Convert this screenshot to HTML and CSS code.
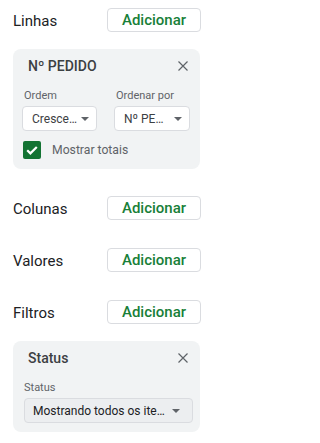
FILE: index.html
```html
<!DOCTYPE html>
<html lang="pt">
<head>
<meta charset="utf-8">
<link rel="stylesheet" href="styles.css">
</head>
<body>
<div class="panel">
  <div class="row">
    <span class="row-label">Linhas</span>
    <button class="add-btn">Adicionar</button>
  </div>

  <div class="card card-rows">
    <div class="card-head">
      <span class="card-title">Nº PEDIDO</span>
      <svg class="close" width="10" height="10" viewBox="0 0 10 10"><path d="M0.5 0.5L9.5 9.5M9.5 0.5L0.5 9.5" stroke="#5f6368" stroke-width="1.2" fill="none"/></svg>
    </div>
    <div class="sort-grid">
      <div class="field">
        <span class="field-label">Ordem</span>
        <div class="select"><span class="select-text">Cresce…</span><span class="caret"></span></div>
      </div>
      <div class="field">
        <span class="field-label">Ordenar por</span>
        <div class="select"><span class="select-text">Nº PE…</span><span class="caret"></span></div>
      </div>
    </div>
    <div class="check-row">
      <span class="checkbox">
        <svg width="18" height="18" viewBox="0 0 18 18"><path d="M4.2 9.2L7.4 12.4L13.8 6" stroke="#fff" stroke-width="2.2" fill="none"/></svg>
      </span>
      <span class="check-label">Mostrar totais</span>
    </div>
  </div>

  <div class="row row-gap">
    <span class="row-label">Colunas</span>
    <button class="add-btn">Adicionar</button>
  </div>
  <div class="row row-gap">
    <span class="row-label">Valores</span>
    <button class="add-btn">Adicionar</button>
  </div>
  <div class="row row-gap">
    <span class="row-label">Filtros</span>
    <button class="add-btn">Adicionar</button>
  </div>

  <div class="card card-filter">
    <div class="card-head">
      <span class="card-title">Status</span>
      <svg class="close" width="10" height="10" viewBox="0 0 10 10"><path d="M0.5 0.5L9.5 9.5M9.5 0.5L0.5 9.5" stroke="#5f6368" stroke-width="1.2" fill="none"/></svg>
    </div>
    <span class="field-label filter-label">Status</span>
    <div class="select select-gray"><span class="select-text">Mostrando todos os ite…</span><span class="caret"></span></div>
  </div>
</div>
</body>
</html>
```

FILE: styles.css
```css
html, body {
  margin: 0;
  padding: 0;
  background: #ffffff;
}

body {
  font-family: Roboto, "Noto Sans", sans-serif;
  color: #202124;
}

.panel {
  width: 212px;
  box-sizing: border-box;
  padding: 8px 11px 0 13px;
}

.row {
  display: flex;
  align-items: center;
  justify-content: space-between;
  height: 24px;
}

.row-gap {
  margin-top: 28px;
}

.card-rows + .row-gap {
  margin-top: 27px;
}

.row-label {
  font-size: 15px;
  color: #202124;
  padding-top: 2px;
}

.add-btn {
  width: 94px;
  height: 24px;
  box-sizing: border-box;
  border: 1px solid #dadce0;
  border-radius: 4px;
  background: #ffffff;
  color: #188038;
  font-family: Roboto, sans-serif;
  font-weight: 500;
  font-size: 15px;
  padding: 0;
  line-height: 22px;
}

.card {
  background: #f1f3f4;
  border-radius: 8px;
  margin-right: 1px;
}

.card-rows {
  margin-top: 17px;
  padding: 0 10px 10px 9px;
}

.card-filter {
  margin-top: 17px;
  padding: 0 7px 9px 11px;
}

.card-head {
  height: 34px;
  display: flex;
  align-items: center;
  justify-content: space-between;
}

.card-rows .card-head {
  padding-left: 6px;
  padding-right: 2px;
}

.card-filter .card-head {
  padding-left: 4px;
  padding-right: 5px;
}

.card-title {
  font-size: 14px;
  font-weight: 500;
  color: #3c4043;
}

.close {
  display: block;
}

.sort-grid {
  display: grid;
  grid-template-columns: 75px 76px;
  column-gap: 17px;
  margin-top: 6px;
}

.field {
  display: flex;
  flex-direction: column;
}

.field-label {
  font-size: 11px;
  line-height: 14px;
  color: #5f6368;
  padding-left: 2px;
  margin-bottom: 3px;
}

.filter-label {
  display: block;
  padding-left: 0;
  margin-top: 6px;
}

.select {
  height: 25px;
  box-sizing: border-box;
  border: 1px solid #dadce0;
  border-radius: 4px;
  background: #ffffff;
  display: flex;
  align-items: center;
  justify-content: space-between;
  padding: 0 7px 0 9px;
}

.select-gray {
  background: #eceef0;
  padding: 0 12px 0 8px;
}

.select-text {
  font-size: 12px;
  color: #3c4043;
  white-space: nowrap;
}

.select-gray .select-text {
  color: #202124;
}

.caret {
  width: 0;
  height: 0;
  border-left: 4px solid transparent;
  border-right: 4px solid transparent;
  border-top: 4px solid #5f6368;
}

.check-row {
  display: flex;
  align-items: center;
  margin-top: 10px;
  padding-left: 1px;
}

.checkbox {
  width: 18px;
  height: 18px;
  flex: none;
  border-radius: 2px;
  background: #137333;
  display: block;
}

.checkbox svg {
  display: block;
}

.check-label {
  font-size: 12.2px;
  white-space: nowrap;
  color: #5f6368;
  margin-left: 11px;
}
```
